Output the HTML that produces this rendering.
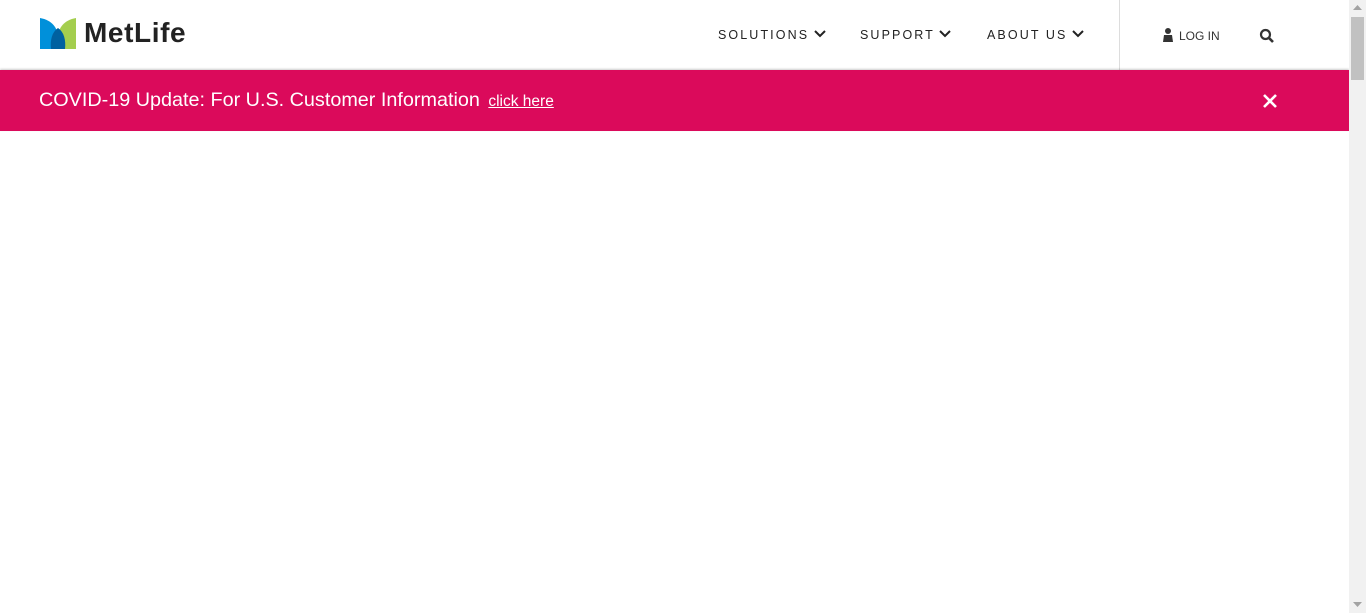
<!DOCTYPE html>
<html><head><style>
body{margin:0;width:1366px;height:613px;overflow:hidden;background:#fff;font-family:"Liberation Sans",sans-serif;position:relative}
.sb{position:absolute;left:1349px;top:0;width:17px;height:613px;background:#f1f1f1}
.thumb{position:absolute;left:1351px;top:17px;width:13px;height:63px;background:#c1c1c1}
.hdr{position:absolute;left:0;top:0;width:1349px;height:70px;background:#fff}
.logo{position:absolute;left:84px;top:17px;font-size:28px;font-weight:bold;color:#222;letter-spacing:0.6px}
.nav{position:absolute;top:28px;font-size:12.5px;letter-spacing:2.1px;color:#222}
.nav svg{vertical-align:1px;margin-left:-1px}
.div{position:absolute;left:1119px;top:0;width:1px;height:70px;background:#ddd}
.ban{position:absolute;left:0;top:70px;width:1349px;height:61px;background:#db0a5b;box-shadow:0 -1px 2px rgba(0,0,0,.2)}
.ban .t{position:absolute;left:39px;top:19px;color:#fff;font-size:19.8px}
.ban a{color:#fff;font-size:15.5px;text-decoration:underline;margin-left:3px}
</style></head><body>
<div class="hdr">
<svg style="position:absolute;left:40px;top:18px" width="36" height="31" viewBox="0 0 36 31">
<path d="M0 0 C12 2 18 10 18 20 L18 31 L0 31Z" fill="#0090da"/>
<path d="M36 0 C24 2 18 10 18 20 L18 31 L36 31Z" fill="#a4ce4e"/>
<path d="M18 10 C12 14 10 22 11 31 L25 31 C26 22 24 14 18 10Z" fill="#0061a0"/>
</svg>
<div class="logo">MetLife</div>
<div class="nav" style="left:718px">SOLUTIONS <svg width="12" height="8" viewBox="0 0 12 8"><path d="M1 1l5 5 5-5" stroke="#222" stroke-width="2" fill="none"/></svg></div>
<div class="nav" style="left:860px">SUPPORT <svg width="12" height="8" viewBox="0 0 12 8"><path d="M1 1l5 5 5-5" stroke="#222" stroke-width="2" fill="none"/></svg></div>
<div class="nav" style="left:987px">ABOUT US <svg width="12" height="8" viewBox="0 0 12 8"><path d="M1 1l5 5 5-5" stroke="#222" stroke-width="2" fill="none"/></svg></div>
<div class="div"></div>
<svg style="position:absolute;left:1163px;top:28px" width="10" height="14" viewBox="0 0 10 14"><circle cx="5" cy="3" r="3" fill="#333"/><path d="M1 7h8l1 7H0z" fill="#333"/></svg>
<div style="position:absolute;left:1179px;top:29px;font-size:12px;color:#333">LOG IN</div>
<svg style="position:absolute;left:1259px;top:28px" width="16" height="16" viewBox="0 0 16 16"><circle cx="6.5" cy="6.5" r="4.5" stroke="#333" stroke-width="2.2" fill="none"/><path d="M10 10l4 4" stroke="#333" stroke-width="2.6"/></svg>
</div>
<div class="ban"><div class="t">COVID-19 Update: For U.S. Customer Information <a>click here</a></div>
<svg style="position:absolute;left:1262px;top:23px" width="16" height="16" viewBox="0 0 16 16"><path d="M2 2l12 12M14 2L2 14" stroke="#fff" stroke-width="2.6"/></svg>
</div>
<div class="sb"></div><div class="thumb"></div>
<svg style="position:absolute;left:1353px;top:5px" width="9" height="6"><path d="M0 5h9L4.5 0z" fill="#a3a3a3"/></svg>
<svg style="position:absolute;left:1353px;top:602px" width="9" height="6"><path d="M0 0h9L4.5 5z" fill="#a3a3a3"/></svg>
</body></html>
